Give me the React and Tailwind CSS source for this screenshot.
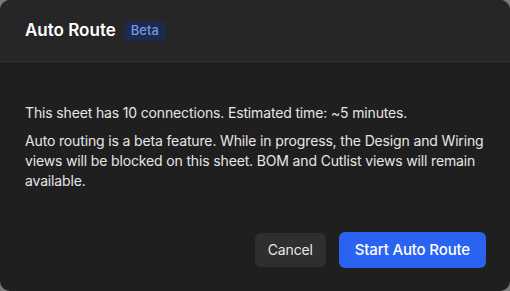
import React from "react";

function App() {
    return (
        <div className="w-[510px] h-[291px] bg-[#7a7a7a] tracking-[-0.15px]" style={{ fontFamily: "Inter, 'Noto Sans', sans-serif" }}>
            <div className="w-full h-full rounded-[10px] overflow-hidden bg-[#1f1f1f] flex flex-col">
                <div className="h-[62px] bg-[#262626] border-b border-[#343434] flex items-center px-[25px] gap-2 shrink-0">
                    <span className="text-[17px] font-semibold text-white tracking-normal">Auto Route</span>
                    <span className="h-5 px-[7px] rounded bg-[#1d2a4b] text-[#6f97e6] text-[13px] font-medium flex items-center tracking-normal">Beta</span>
                </div>
                <div className="flex-1 flex flex-col pl-[25px] pr-[24px] pt-[41px] text-[14px] leading-5 text-[#e6e6e6]">
                    <p className="mb-2">This sheet has 10 connections. Estimated time: ~5 minutes.</p>
                    <p>Auto routing is a beta feature. While in progress, the Design and Wiring views will be blocked on this sheet. BOM and Cutlist views will remain available.</p>
                    <div className="mt-auto mb-[23px] flex justify-end items-center gap-[13px]">
                        <button className="h-[34px] px-[13px] rounded-md bg-[#2f2f2f] text-[14px] text-[#e8e8e8]">Cancel</button>
                        <button className="h-9 px-4 rounded-md bg-[#2a63f2] text-[15px] font-medium text-white">Start Auto Route</button>
                    </div>
                </div>
            </div>
        </div>
    );
}

export default App;
